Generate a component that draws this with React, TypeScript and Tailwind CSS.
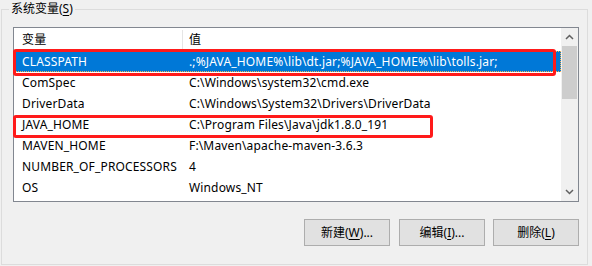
const rows = [
  {name: 'CLASSPATH', value: '.;%JAVA_HOME%\\lib\\dt.jar;%JAVA_HOME%\\lib\\tolls.jar;', selected: true},
  {name: 'ComSpec', value: 'C:\\Windows\\system32\\cmd.exe'},
  {name: 'DriverData', value: 'C:\\Windows\\System32\\Drivers\\DriverData'},
  {name: 'JAVA_HOME', value: 'C:\\Program Files\\Java\\jdk1.8.0_191'},
  {name: 'MAVEN_HOME', value: 'F:\\Maven\\apache-maven-3.6.3'},
  {name: 'NUMBER_OF_PROCESSORS', value: '4'},
  {name: 'OS', value: 'Windows_NT'},
]

const font = {fontFamily: '"Noto Sans", "Noto Sans CJK SC", sans-serif'}

const Btn = ({label, hot, tail, className = ''}: {label: string; hot: string; tail: string; className?: string}) => (
  <button
    type="button"
    className={`w-[86px] h-[27px] bg-[#e1e1e1] border border-[#adadad] text-[12px] text-black flex items-center justify-center ${className}`}
  >
    {label}(<span className="underline underline-offset-2">{hot}</span>){tail}
  </button>
)

export default function App() {
  return (
    <main className="w-[592px] h-[266px] bg-[#f0f0f0] relative overflow-hidden text-black" style={font}>
      <fieldset className="absolute left-[1px] top-[2px] w-[587px] h-[263px] border border-[#dcdcdc] m-0 pl-[11px] pr-0 pb-0 pt-0">
        <legend className="ml-[-4px] px-[2px] text-[12px] leading-[14px]">
          系统变量(<span className="underline underline-offset-2">S</span>)
        </legend>

        <section className="mt-[11px] w-[566px] h-[175px] border border-[#828790] bg-white flex">
          <div className="flex-1 overflow-hidden text-[12px] tracking-[0.15px]">
            <div className="flex h-[23px] items-center">
              <div className="w-[168px] pl-[8px]">变量</div>
              <div className="w-px h-[19px] bg-[#e5e5e5]" />
              <div className="pl-[6px]">值</div>
            </div>
            {rows.map((row, index) => (
              <div
                key={`row-${index}`}
                className={`flex h-[21px] items-center whitespace-nowrap ${row.selected ? 'bg-[#0078d7] text-white outline-1 outline-dotted outline-[#ffb34d] -outline-offset-1' : ''}`}
              >
                <div className="w-[169px] pl-[8px]">{row.name}</div>
                <div className="pl-[6px]">{row.value}</div>
              </div>
            ))}
          </div>

          <div className="w-[17px] bg-[#f0f0f0] flex flex-col">
            <div className="h-[18px] flex items-center justify-center">
              <svg width="9" height="6" viewBox="0 0 9 6"><path d="M1 5 L4.5 1.5 L8 5" fill="none" stroke="#606060" strokeWidth="1.5"/></svg>
            </div>
            <div className="mx-[1px] h-[53px] bg-[#cdcdcd]" />
            <div className="flex-1" />
            <div className="h-[18px] flex items-center justify-center">
              <svg width="9" height="6" viewBox="0 0 9 6"><path d="M1 1 L4.5 4.5 L8 1" fill="none" stroke="#606060" strokeWidth="1.5"/></svg>
            </div>
          </div>
        </section>

        <section className="mt-[17px] w-[566px] flex justify-end gap-[8px]">
          <Btn label="新建" hot="W" tail="..." className="mr-[1px]" />
          <Btn label="编辑" hot="I" tail="..." />
          <Btn label="删除" hot="L" tail="" />
        </section>
      </fieldset>

      {/* red annotation boxes */}
      <div className="absolute left-[13px] top-[49px] w-[543px] h-[27px] border-[3px] border-[#ff1a1a] rounded-[3px]" />
      <div className="absolute left-[13px] top-[115px] w-[420px] h-[23px] border-[3px] border-[#ff1a1a] rounded-[3px]" />
    </main>
  )
}
